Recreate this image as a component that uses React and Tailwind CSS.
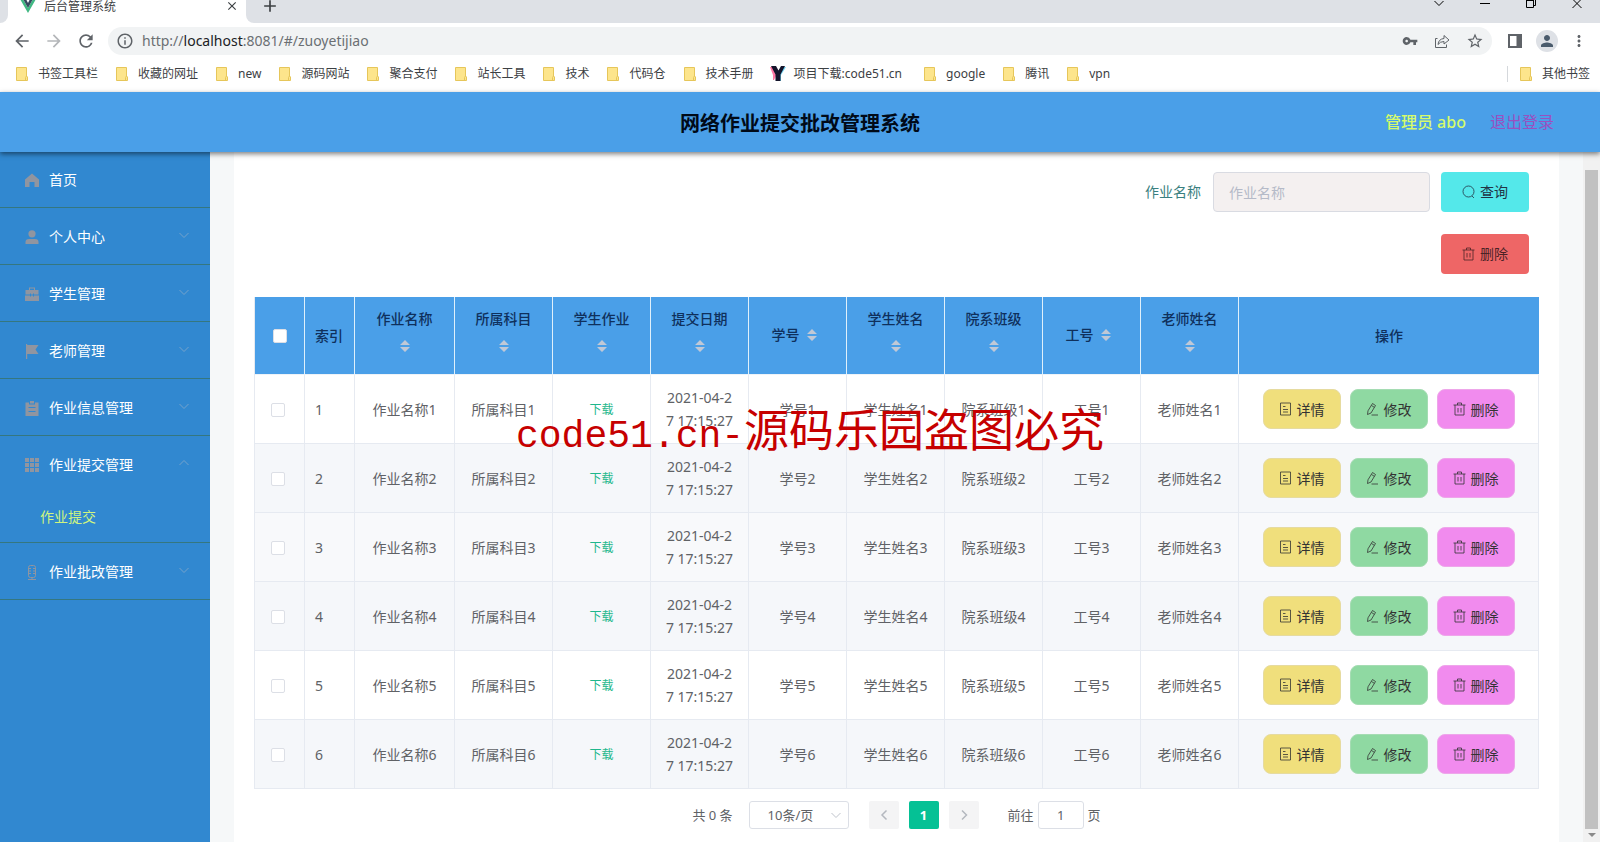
import React, { useState } from "react";
import { MdArrowBack, MdArrowForward, MdRefresh, MdInfoOutline, MdVpnKey, MdStarBorder, MdPerson, MdMoreVert, MdAdd, MdClose } from "react-icons/md";

const bookmarks = [
  "书签工具栏",
  "收藏的网址",
  "new",
  "源码网站",
  "聚合支付",
  "站长工具",
  "技术",
  "代码仓",
  "技术手册",
  "项目下载:code51.cn",
  "google",
  "腾讯",
  "vpn",
];

const menus = [
  { name: "首页", icon: "home" },
  { name: "个人中心", icon: "user", arrow: true },
  { name: "学生管理", icon: "case", arrow: true },
  { name: "老师管理", icon: "flag", arrow: true },
  { name: "作业信息管理", icon: "order", arrow: true },
  { name: "作业提交管理", icon: "grid", arrow: true, children: ["作业提交"] },
  { name: "作业批改管理", icon: "mic", arrow: true },
];

const columns = ["作业名称", "所属科目", "学生作业", "提交日期", "学号", "学生姓名", "院系班级", "工号", "老师姓名"];

const rows = [1, 2, 3, 4, 5, 6];

const menuIcons = {
  home: <path d="M7 0.5 L14 6.5 V14 H9.5 V9 H4.5 V14 H0 V6.5 Z" />,
  user: (
    <>
      <circle cx="7" cy="3.8" r="3.6" />
      <path d="M0.5 14 V12 Q0.5 9 4 9 H10 Q13.5 9 13.5 12 V14 Z" />
    </>
  ),
  case: (
    <path d="M4 3 V0.5 H10 V3 H13.5 V7.5 H9 V6.5 H8 V7.5 H6 V6.5 H5 V7.5 H0.5 V3 Z M5 1.5 V3 H9 V1.5 Z M0 8.5 H5 V9.5 H6 V8.5 H8 V9.5 H9 V8.5 H14 V14 H0 Z" fillRule="evenodd" />
  ),
  flag: <path d="M1 0 H2.2 V1 H13.5 L10.5 5.5 L13.5 10 H2.2 V15 H1 Z" />,
  order: (
    <path d="M0.5 1.5 H4 V3.5 H10 V1.5 H13.5 V15 H0.5 Z M5 0 H9 V2.5 H5 Z M3.5 6 H10.5 V7 H3.5 Z M3.5 10 H10.5 V11 H3.5 Z" fillRule="evenodd" />
  ),
  grid: (
    <path d="M0 0 H4 V4 H0 Z M5 0 H9 V4 H5 Z M10 0 H14 V4 H10 Z M0 5 H4 V9 H0 Z M5 5 H9 V9 H5 Z M10 5 H14 V9 H10 Z M0 10 H4 V14 H0 Z M5 10 H9 V14 H5 Z M10 10 H14 V14 H10 Z" />
  ),
  mic: (
    <g fill="none" stroke="currentColor">
      <rect x="3.5" y="0.5" width="7" height="12" rx="2" />
      <path d="M7 12.5 V14.5 M3 14.5 H11 M3.5 3.5 H6 M8 3.5 H10.5 M3.5 6 H6 M8 6 H10.5 M3.5 8.5 H6 M8 8.5 H10.5" />
    </g>
  ),
};

const MenuIcon = ({ name }) => (
  <svg className="w-[14px] h-[15px] shrink-0 text-[#9095a0]" viewBox="0 0 14 15" fill="currentColor">
    {menuIcons[name]}
  </svg>
);

const Chevron = ({ up, className }) => (
  <svg className={className} viewBox="0 0 12 12" fill="none" stroke="currentColor">
    <path d={up ? "M1.5 8 L6 3.5 L10.5 8" : "M1.5 4 L6 8.5 L10.5 4"} />
  </svg>
);

const Folder = () => (
  <svg className="w-3 h-[14px] shrink-0" viewBox="0 0 12 14">
    <path d="M0.5 0.5 H10.5 V9 L11.5 10 V13.5 H0.5 Z" fill="#fde58c" stroke="#e6c65a" />
    <path d="M9.5 13 V10.5 L10.5 9" fill="none" stroke="#e6c65a" />
  </svg>
);

const CodeLogo = () => (
  <svg className="w-4 h-4 shrink-0" viewBox="0 0 16 16">
    <path d="M0 1 H5 L8 6 L4 14 H3 V9 Z" fill="#ff3d7f" opacity="0.7" />
    <path d="M11 1 H16 L11 9 V15 H8 Z" fill="#35c5f0" opacity="0.7" />
    <path d="M1 0 H6 L8.5 4.5 L11 0 H15 L10.5 8.5 V15 H5.5 V8.5 Z" fill="#14142b" />
  </svg>
);

const TrashIcon = () => (
  <svg className="w-[13px] h-[14px]" viewBox="0 0 13 14" fill="none" stroke="currentColor" strokeWidth="0.8">
    <path d="M0.5 3 H12.5 M2 3 V13 H11 V3 M4.5 3 V1 H8.5 V3 M5 6 V10.5 M8 6 V10.5" />
  </svg>
);

const DetailIcon = () => (
  <svg className="w-[13px] h-[14px]" viewBox="0 0 13 14" fill="none" stroke="currentColor" strokeWidth="0.8">
    <path d="M1.5 1 H11.5 V13 H1.5 Z M4 4.5 H6.5 M4 7.5 H9 M4 10 H9" />
  </svg>
);

const EditIcon = () => (
  <svg className="w-[13px] h-[14px]" viewBox="0 0 13 14" fill="none" stroke="currentColor" strokeWidth="0.8">
    <path d="M6.5 1.5 L9.5 3.5 L5 11 L1.5 12.5 L2 8.8 Z M5.5 3.5 L8.3 5.3 M5.5 13 H12" />
  </svg>
);

const SearchIcon = () => (
  <svg className="w-[13px] h-[14px]" viewBox="0 0 13 14" fill="none" stroke="currentColor" strokeWidth="0.8">
    <circle cx="6.5" cy="6.5" r="5.5" />
    <path d="M10 11 L12 13" />
  </svg>
);

const SortCaret = () => (
  <span className="inline-flex w-6 h-[34px] items-center justify-center pb-[2px] align-middle">
    <svg className="w-[10px] h-3" viewBox="0 0 10 12" fill="#c0c8d6">
      <path d="M5 0 L10 5 H0 Z M0 7 H10 L5 12 Z" />
    </svg>
  </span>
);

const BrowserBar = () => (
  <div className="shrink-0 bg-white text-[#3c4043]">
    <div className="flex h-[23px] bg-[#dee1e6]">
      <div className="w-2 bg-white">
        <div className="h-full rounded-br-lg bg-[#dee1e6]"></div>
      </div>
      <div className="flex w-[238px] justify-between bg-white pl-3 pr-[7px]">
        <div className="flex">
          <svg className="w-4 h-[14px]" viewBox="0 0 16 14">
            <path d="M0 -1 H3 L8 8 L13 -1 H16 L8 13 Z" fill="#41b883" />
            <path d="M3 -1 H6 L8 3 L10 -1 H13 L8 8 Z" fill="#35495e" />
          </svg>
          <span className="ml-2 text-xs leading-[14px]">后台管理系统</span>
        </div>
        <MdClose className="mt-[-1px] h-[14px] w-[14px]" />
      </div>
      <div className="flex-1 bg-white">
        <div className="flex h-full rounded-bl-lg bg-[#dee1e6]">
          <MdAdd className="ml-[14px] -mt-1 h-5 w-5" />
          <div className="ml-auto flex gap-9 pr-[18px] text-black">
            <svg className="h-[10px] w-[10px]" viewBox="0 0 10 10" fill="none" stroke="currentColor"><path d="M0.5 1 L5 5.5 L9.5 1" /></svg>
            <svg className="h-[10px] w-[10px]" viewBox="0 0 10 10" stroke="currentColor"><path d="M0 3.5 H10" /></svg>
            <svg className="h-[10px] w-[10px]" viewBox="0 0 10 10" fill="none" stroke="currentColor"><path d="M0.5 0 V7.5 H7.5 V0 M9.5 0 V5.5 H7.5 M0.5 0.5 H7.5" /></svg>
            <svg className="h-[10px] w-[10px]" viewBox="0 0 10 10" fill="none" stroke="currentColor"><path d="M0.5 -1 L9.5 8 M9.5 -1 L0.5 8" /></svg>
          </div>
        </div>
      </div>
    </div>

    <div className="flex h-9 items-center pl-3 pr-3 text-[#5f6368]">
      <MdArrowBack className="h-5 w-5" />
      <MdArrowForward className="ml-3 h-5 w-5 text-[#b4b6b9]" />
      <MdRefresh className="ml-3 h-5 w-5" />
      <div className="ml-3 flex h-7 flex-1 items-center rounded-full bg-[#f1f3f4] pl-2 pr-2">
        <MdInfoOutline className="h-[18px] w-[18px]" />
        <span className="ml-2 text-sm text-[#6b6f73]">
          http://<span className="text-[#202124]">localhost</span>:8081/#/zuoyetijiao
        </span>
        <div className="ml-auto flex items-center gap-4">
          <MdVpnKey className="h-4 w-4" />
          <svg className="h-4 w-4" viewBox="0 0 16 16" fill="none" stroke="currentColor">
            <path d="M3.5 5.5 H1.5 V14.5 H12.5 V11.5 M4 11.5 Q4.5 6 10 5.5 V2.5 L15 7 L10 11 V8.5 Q6 8.5 4 11.5 Z" />
          </svg>
          <MdStarBorder className="h-[18px] w-[18px]" />
        </div>
      </div>
      <svg className="ml-4 h-[14px] w-[14px]" viewBox="0 0 14 14">
        <path d="M0 0 H14 V14 H0 Z M2 2 V12 H8.5 V2 Z" fill="currentColor" fillRule="evenodd" />
      </svg>
      <span className="ml-[14px] flex h-[22px] w-[22px] items-center justify-center rounded-full bg-[#dee1e6]">
        <MdPerson className="h-[18px] w-[18px] text-[#4a5b6c]" />
      </span>
      <MdMoreVert className="ml-3 h-[18px] w-[18px]" />
    </div>

    <div className="flex h-[33px] items-center px-4 pb-1 text-xs">
      <nav className="flex items-center">
        {bookmarks.map((item) =>
          item.startsWith("项目") ? (
            <a key={item} href="#" className="mr-[22px] -ml-[2px] flex items-center gap-2 whitespace-nowrap">
              <CodeLogo />
              {item}
            </a>
          ) : (
            <a key={item} href="#" className="mr-[18px] flex items-center gap-[10px] whitespace-nowrap">
              <Folder />
              {item}
            </a>
          )
        )}
      </nav>
      <a href="#" className="-mr-[6px] ml-auto flex items-center gap-[10px] border-l border-[#d5d8dc] pl-3 whitespace-nowrap">
        <Folder />
        其他书签
      </a>
    </div>
  </div>
);

const Sidebar = () => (
  <aside className="w-[210px] shrink-0 bg-[#3188d0] text-sm">
    <nav className="-mt-px">
      {menus.map((item) => (
        <div key={item.name} className="border-b border-[#35777f]">
          <button className="flex h-14 w-full items-center pt-[2px] pl-[25px] pr-5 text-white">
            <MenuIcon name={item.icon} />
            <span className="ml-[10px]">{item.name}</span>
            {item.arrow && <Chevron up={!!item.children} className="ml-auto mb-1 h-3 w-3 text-[#75a3cc]" />}
          </button>
          {item.children?.map((child) => (
            <a key={child} href="#" className="flex h-[50px] items-center pl-10 text-[#d0f580]">
              {child}
            </a>
          ))}
        </div>
      ))}
    </nav>
  </aside>
);

const actionClass = "flex h-10 w-[78px] items-center justify-center gap-[5px] rounded-lg border text-[#333]";

const DataTable = () => {
  const [checked, setChecked] = useState([]);

  const toggle = (id) => {
    setChecked(checked.includes(id) ? checked.filter((c) => c !== id) : [...checked, id]);
  };

  const cell = "border-r border-b border-[#e6eaf1] px-[10px]";
  const head = "border-r border-b border-r-[#dff0fb] border-b-[#eef3f8] px-[10px] font-medium last:border-r-0";
  const box = "block h-[14px] w-[14px] appearance-none rounded-xs border border-[#dcdfe6] bg-white checked:bg-[#00c292]";

  return (
    <table className="w-full table-fixed border-separate border-spacing-0 border-l border-[#e6eaf1] text-center text-sm leading-[23px] text-[#606266]">
      <colgroup>
        <col className="w-[50px]" />
        <col className="w-[50px]" />
        <col className="w-[100px]" />
        {columns.slice(1).map((c) => (
          <col key={c} />
        ))}
        <col className="w-[300px]" />
      </colgroup>
      <thead className="bg-[#4a9fe8] text-[#0f305c]">
        <tr className="h-[78px]">
          <th className={head}>
            <input type="checkbox" aria-label="全选" className={`${box} mx-auto`} />
          </th>
          <th className={`${head} whitespace-nowrap text-left`}>索引</th>
          {columns.map((c) => (
            <th key={c} className={head}>
              {c}
              <SortCaret />
            </th>
          ))}
          <th className={head}>操作</th>
        </tr>
      </thead>
      <tbody>
        {rows.map((n) => (
          <tr key={n} className={`h-[69px] ${n % 2 === 0 ? "bg-[#f5f7fa]" : n === 3 ? "bg-[#f8f9fb]" : "bg-white"}`}>
            <td className={cell}>
              <input
                type="checkbox"
                aria-label={`选择${n}`}
                className={`${box} mt-[2px] ml-[6px]`}
                checked={checked.includes(n)}
                onChange={() => toggle(n)}
              />
            </td>
            <td className={`${cell} text-left`}>{n}</td>
            <td className={cell}>作业名称{n}</td>
            <td className={cell}>所属科目{n}</td>
            <td className={`${cell} pb-[2px]`}>
              <button className="text-xs text-[#1fb78c]">下载</button>
            </td>
            <td className={`${cell} whitespace-nowrap`}>
              2021-04-2<br />7 17:15:27
            </td>
            <td className={cell}>学号{n}</td>
            <td className={cell}>学生姓名{n}</td>
            <td className={cell}>院系班级{n}</td>
            <td className={cell}>工号{n}</td>
            <td className={cell}>老师姓名{n}</td>
            <td className={cell}>
              <div className="flex justify-center gap-[9px]">
                <button className={`${actionClass} border-[#e6dba0] bg-[#f0df7c]`}><DetailIcon />详情</button>
                <button className={`${actionClass} border-[#a5dcb3] bg-[#8fd9a2]`}><EditIcon />修改</button>
                <button className={`${actionClass} border-[#eea6ea] bg-[#f18bee]`}><TrashIcon />删除</button>
              </div>
            </td>
          </tr>
        ))}
      </tbody>
    </table>
  );
};

const Pagination = () => (
  <div className="mt-3 flex h-7 items-center justify-center text-[13px] text-[#606266]">
    <span>共 0 条</span>
    <div className="relative ml-4">
      <select aria-label="每页条数" className="h-7 w-[100px] appearance-none rounded-[3px] border border-[#dcdfe6] bg-white pl-[18px]">
        <option>10条/页</option>
        <option>20条/页</option>
      </select>
      <Chevron className="absolute right-[7px] top-2 h-3 w-3 text-[#c0c4cc]" />
    </div>
    <button aria-label="上一页" className="ml-5 flex h-7 w-[30px] items-center justify-center rounded-xs bg-[#f4f4f5] text-[#b4b8bf]">
      <svg className="h-3 w-3" viewBox="0 0 12 12" fill="none" stroke="currentColor" strokeWidth="1.5"><path d="M8.5 1.5 L4 6 L8.5 10.5" /></svg>
    </button>
    <button className="ml-[10px] h-7 w-[30px] rounded-xs bg-[#05c195] font-bold text-white">1</button>
    <button aria-label="下一页" className="ml-[10px] flex h-7 w-[30px] items-center justify-center rounded-xs bg-[#f4f4f5] text-[#b4b8bf]">
      <svg className="h-3 w-3" viewBox="0 0 12 12" fill="none" stroke="currentColor" strokeWidth="1.5"><path d="M4 1.5 L8.5 6 L4 10.5" /></svg>
    </button>
    <label htmlFor="page-input" className="ml-[29px]">前往</label>
    <input id="page-input" defaultValue="1" className="mx-1 h-7 w-[46px] rounded-[3px] border border-[#dcdfe6] text-center" />
    <span>页</span>
  </div>
);

const App = () => {
  const [keyword, setKeyword] = useState("");

  return (
    <div className="relative flex h-screen flex-col overflow-hidden bg-white font-['Noto_Sans','Noto_Sans_CJK_SC',sans-serif]">
      <BrowserBar />

      <header className="z-10 grid h-[60px] shrink-0 grid-cols-3 items-center bg-[#4a9fe8] shadow-[0_2px_5px_rgba(0,0,0,0.5)]">
        <h1 className="col-start-2 pt-[3px] text-center text-xl font-bold text-[#000a18]">网络作业提交批改管理系统</h1>
        <div className="flex justify-end gap-6 pr-[46px]">
          <span className="font-medium text-[#d5fb6c]">管理员 abo</span>
          <a href="#" className="text-[#9a50c0]">退出登录</a>
        </div>
      </header>

      <div className="flex min-h-0 flex-1">
        <Sidebar />

        <main className="min-w-0 flex-1 overflow-hidden bg-[#f6f8f9] px-6">
          <div className="min-h-full bg-white px-5 pt-5 text-sm">
            <form className="mr-[10px] flex flex-col items-end gap-[22px]" onSubmit={(e) => e.preventDefault()}>
              <div className="flex items-center">
                <label htmlFor="name-input" className="mr-3 text-[#3a7f80]">作业名称</label>
                <input
                  id="name-input"
                  value={keyword}
                  onChange={(e) => setKeyword(e.target.value)}
                  placeholder="作业名称"
                  className="h-10 w-[217px] rounded border border-[#d9dbe2] bg-[#f4f0f0] px-[15px] placeholder:text-[#b5bac8]"
                />
                <button className="ml-[11px] flex h-10 w-[88px] items-center justify-center gap-[5px] rounded bg-[#54e8ea] text-[#234]">
                  <SearchIcon />
                  查询
                </button>
              </div>
              <button type="button" className="flex h-10 w-[88px] items-center justify-center gap-[5px] rounded bg-[#ee6666] text-[#4a2326]">
                <TrashIcon />
                删除
              </button>
            </form>

            <div className="mt-[23px]">
              <DataTable />
            </div>
            <Pagination />
          </div>
        </main>

        {/* scrollbar */}
        <div className="flex w-[17px] shrink-0 flex-col items-center bg-[#f1f1f1] pt-[18px]">
          <div className="w-[13px] flex-1 bg-[#c1c1c1]"></div>
          <svg className="my-1 h-[5px] w-2" viewBox="0 0 8 5" fill="#8a8a8a"><path d="M0 0 H8 L4 4 Z" /></svg>
        </div>
      </div>

      <p className="pointer-events-none absolute left-[516px] top-[400px] z-20 whitespace-nowrap text-[45px] leading-[60px] text-[#c60000]">
        <span className="font-['Liberation_Mono',monospace] text-[38px]">code51.cn-</span>
        源码乐园盗图必究
      </p>
    </div>
  );
};

export default App;
